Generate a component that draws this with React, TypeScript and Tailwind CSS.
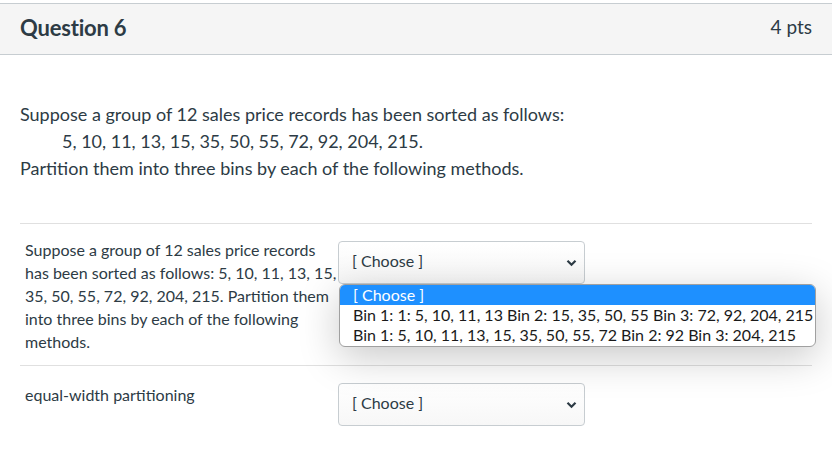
import React from "react";

const Chevron = () => (
  <svg width="11" height="8" viewBox="0 0 11 8" className="shrink-0">
    <path d="M1.5 1.8 L5.5 5.8 L9.5 1.8" fill="none" stroke="#2d3b45" strokeWidth="2.2" />
  </svg>
);

const Select = () => (
  <div className="w-[247px] h-[43px] border border-[#c7cdd1] rounded-[4px] bg-gradient-to-b from-white to-[#f7f7f7] flex items-center justify-between pl-[13px] pr-[7px]">
    <span className="text-[16px] text-[#2d3b45] pb-[3px]">[ Choose ]</span>
    <Chevron />
  </div>
);

export default function App() {
  return (
    <div
      className="w-[832px] h-[463px] bg-white relative overflow-hidden text-[#2d3b45]"
      style={{ fontFamily: "Lato, 'Open Sans', sans-serif" }}
    >
      <div className="pt-[3px]">
        <div className="h-[52px] border-y border-[#c7cdd1] bg-[#f5f5f5] flex items-center justify-between px-5 pb-[3px]">
          <span className="text-[22px] font-bold tracking-[-0.2px]">Question 6</span>
          <span className="text-[19px]">4 pts</span>
        </div>
      </div>

      <div className="px-5">
        <div className="pt-[46px] text-[18px] leading-[27px]">
          <p>Suppose a group of 12 sales price records has been sorted as follows:</p>
          <p className="pl-[42px]">5, 10, 11, 13, 15, 35, 50, 55, 72, 92, 204, 215.</p>
          <p>Partition them into three bins by each of the following methods.</p>
        </div>

        <div className="mt-[41px] border-t border-[#e0e0e0]" />

        <div className="flex pl-[5px] pt-[14px] pb-[12px]">
          <div className="w-[313px] text-[16px] leading-[23px]">
            Suppose a group of 12 sales price records has been sorted as follows: 5, 10, 11, 13, 15, 35, 50, 55, 72, 92, 204, 215. Partition them into three bins by each of the following methods.
          </div>
          <div className="pt-[3px]">
            <Select />
          </div>
        </div>

        <div className="border-t border-[#e0e0e0]" />

        <div className="flex pl-[5px] pt-[17px]">
          <div className="w-[313px] text-[16px] leading-[23px]">equal-width partitioning</div>
          <Select />
        </div>
      </div>

      <div className="absolute left-[339px] top-[284px] w-[477px] h-[63px] bg-white rounded-[6px] border border-[#a0a0a0] shadow-[0_10px_40px_rgba(0,0,0,0.22)] overflow-hidden text-[16px] leading-[19.5px] text-[#1a1a1a]">
        <div className="bg-[#1e90ff] text-white pl-[13px] h-[20px]">[ Choose ]</div>
        <div className="pl-[13px] whitespace-nowrap">Bin 1: 1: 5, 10, 11, 13 Bin 2: 15, 35, 50, 55 Bin 3: 72, 92, 204, 215</div>
        <div className="pl-[13px] whitespace-nowrap">Bin 1: 5, 10, 11, 13, 15, 35, 50, 55, 72 Bin 2: 92 Bin 3: 204, 215</div>
      </div>
    </div>
  );
}
